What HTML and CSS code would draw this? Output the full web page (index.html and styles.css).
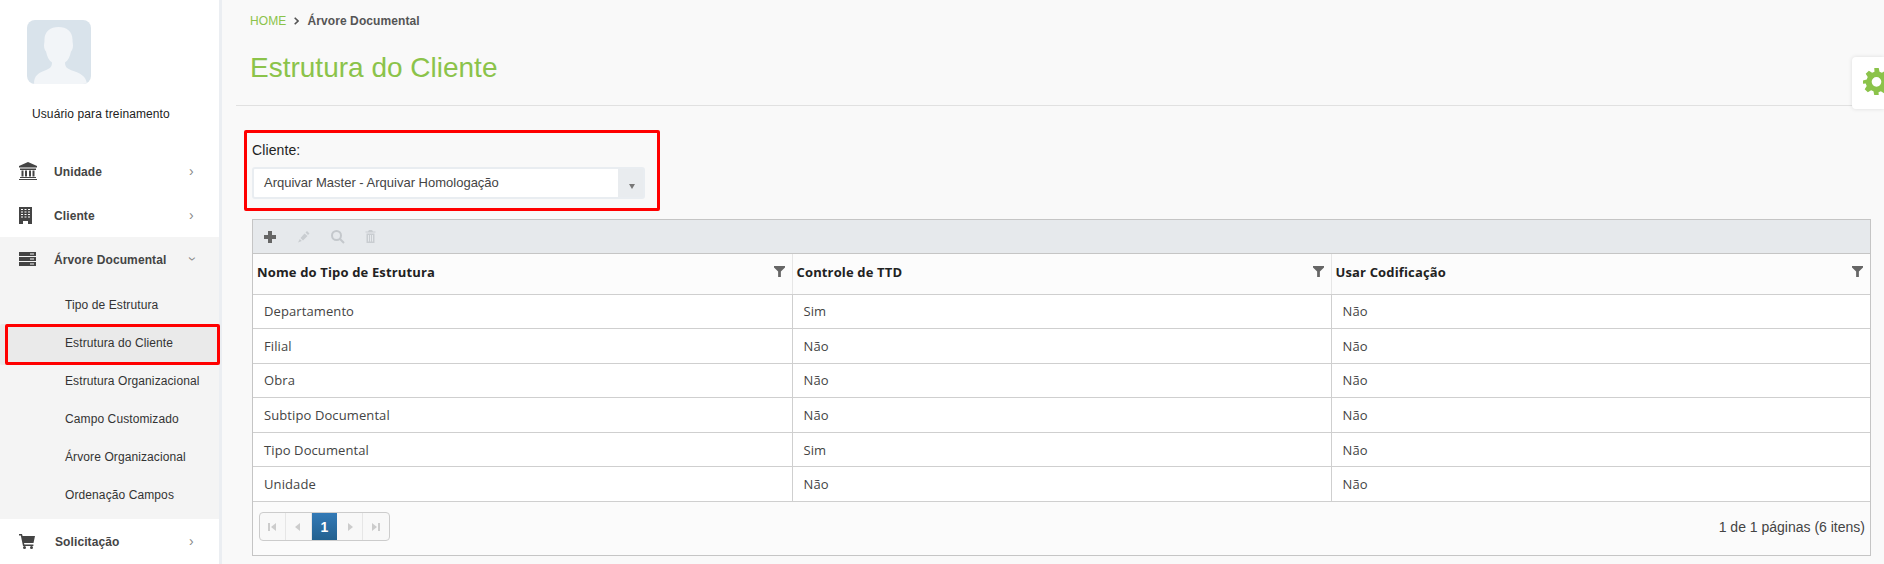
FILE: index.html
```html
<!DOCTYPE html>
<html lang="pt-BR">
<head>
<meta charset="utf-8">
<title>Estrutura do Cliente</title>
<link rel="stylesheet" href="styles.css">
</head>
<body>
<div class="app">
  <aside class="sidebar">
    <div class="avatar">
      <svg viewBox="0 0 64 64" width="64" height="64"><path fill="#f2f5f8" d="M7 64c0-8 4-11 11-13.500 5-2 7-3.500 7-8-3-2-5-6-6-11-1-1-2-3-2-6 0-2 .5-3 .5-6 0-8 6-12.500 14-12.500s14 4.500 14 12.500c0 3 .5 4 .5 6 0 3-1 5-2 6-1 5-3 9-6 11 0 4.500 2 6 7 8 8 2.500 14 5.500 15 13.500z"/></svg>
    </div>
    <div class="username">Usuário para treinamento</div>
    <nav class="menu">
      <a class="item"><span class="ico"><svg viewBox="0 0 18 18" width="18" height="18"><path fill="#444" d="M9 0l9 4v1.500H0V4zM1 6.500h16V8H1zM2.500 8.500h2v6h-2zM6 8.500h2v6H6zM10 8.500h2v6h-2zM13.500 8.500h2v6h-2zM1 15h16v1H1zM0 17h18v1H0z"/></svg></span><span class="label">Unidade</span><span class="chev">›</span></a>
      <a class="item"><span class="ico"><svg viewBox="0 0 13 17" width="13" height="17"><path fill="#444" fill-rule="evenodd" d="M0 0h13v17H0zM2 2v1h2V2zM5.500 2v1h2V2zM9 2v1h2V2zM2 4.500v1h2v-1zM5.500 4.500v1h2v-1zM9 4.500v1h2v-1zM2 7v1h2V7zM5.500 7v1h2V7zM9 7v1h2V7zM2 9.500v1h2v-1zM5.500 9.500v1h2v-1zM9 9.500v1h2v-1zM4 14v3h5v-3z"/></svg></span><span class="label">Cliente</span><span class="chev">›</span></a>
      <div class="group">
        <a class="item"><span class="ico"><svg viewBox="0 0 17 14" width="17" height="14"><path fill="#444" fill-rule="evenodd" d="M0 0h17v4H0zM11 1.500V2.500h4v-1zM0 5h17v4H0zM11 6.500v1h4v-1zM0 10h17v4H0zM11 11.500v1h4v-1z"/></svg></span><span class="label">Árvore Documental</span><span class="chev open">›</span></a>
        <ul class="sub">
          <li>Tipo de Estrutura</li>
          <li class="active">Estrutura do Cliente</li>
          <li>Estrutura Organizacional</li>
          <li>Campo Customizado</li>
          <li>Árvore Organizacional</li>
          <li>Ordenação Campos</li>
        </ul>
      </div>
      <a class="item"><span class="ico ico-wide"><svg viewBox="0 0 16 15" width="16" height="15"><path fill="#444" d="M0 0h3l.6 2H16l-1.500 7H5l.4 1.500h9V12H4L1.800 1.500H0z"/><circle fill="#444" cx="5.500" cy="13.500" r="1.500"/><circle fill="#444" cx="12.500" cy="13.500" r="1.500"/></svg></span><span class="label">Solicitação</span><span class="chev">›</span></a>
    </nav>
  </aside>
  <main class="content">
    <div class="breadcrumb"><span class="home">HOME</span><svg class="sep" viewBox="0 0 5 8" width="5" height="8"><path fill="none" stroke="#555" stroke-width="1.600" d="M.7.7L4 4 .7 7.300"/></svg><strong>Árvore Documental</strong></div>
    <h1 class="title">Estrutura do Cliente</h1>
    <div class="gear"><svg viewBox="0 0 24 24" width="27" height="27"><path fill="#8bc34a" fill-rule="evenodd" d="M10 0h4l.7 3.300 2.100.9L19.700 2.400l2.800 2.800-1.800 2.900.9 2.100L24 11v3l-3.300.7-.9 2.100 1.800 2.900-2.800 2.800-2.900-1.800-2.100.9L14 24h-4l-.7-3.300-2.100-.9-2.900 1.800-2.800-2.800 1.800-2.900-.9-2.100L0 14v-3l3.300-.8.9-2.100-1.800-2.900 2.800-2.800 2.900 1.800 2.100-.9zM12 8a4.300 4.300 0 100 8.600A4.300 4.300 0 0012 8z"/></svg></div>
    <div class="client-box">
      <label class="client-label">Cliente:</label>
      <div class="combo"><span class="combo-text">Arquivar Master - Arquivar Homologação</span><span class="combo-btn"></span></div>
    </div>
    <section class="grid">
      <div class="toolbar">
        <svg class="tool" viewBox="0 0 14 14" width="14" height="14"><path fill="#666" d="M5 1h4v4h4v4H9v4H5V9H1V5h4z"/></svg>
        <svg class="tool" viewBox="0 0 14 14" width="14" height="14"><path fill="#c9cdd1" d="M7.500 3.500l3 2.500L6 10.500 3.500 8zM8.500 2.500l1.500-1.500 2.500 2.500L11 5zM2.800 9l2 2-3.800 1.500z"/></svg>
        <svg class="tool" viewBox="0 0 14 14" width="14" height="14"><path fill="none" stroke="#c4c8cc" stroke-width="2" d="M10 5.500a4.500 4.500 0 11-9 0 4.500 4.500 0 019 0zM8.500 8.500l4.500 4.500"/></svg>
        <svg class="tool" viewBox="0 0 14 14" width="14" height="14"><path fill="#c9cdd1" fill-rule="evenodd" d="M4 0h3l1 1.500h2.500v1H.500v-1H3zM1.500 3.500h8V13h-8zM3 5v6.500h1V5zM5 5v6.500h1V5zM7 5v6.500h1V5z"/></svg>
      </div>
      <table class="tbl">
        <colgroup><col class="c1"><col class="c2"><col class="c3"></colgroup>
        <thead>
          <tr>
            <th><span>Nome do Tipo de Estrutura</span><svg class="filter" viewBox="0 0 12 12" width="11" height="11"><path fill="#666" d="M0 0h12v1.500L7.500 6v6h-3V6L0 1.500z"/></svg></th>
            <th><span>Controle de TTD</span><svg class="filter" viewBox="0 0 12 12" width="11" height="11"><path fill="#666" d="M0 0h12v1.500L7.500 6v6h-3V6L0 1.500z"/></svg></th>
            <th><span>Usar Codificação</span><svg class="filter" viewBox="0 0 12 12" width="11" height="11"><path fill="#666" d="M0 0h12v1.500L7.500 6v6h-3V6L0 1.500z"/></svg></th>
          </tr>
        </thead>
        <tbody>
          <tr><td>Departamento</td><td>Sim</td><td>Não</td></tr>
          <tr><td>Filial</td><td>Não</td><td>Não</td></tr>
          <tr><td>Obra</td><td>Não</td><td>Não</td></tr>
          <tr><td>Subtipo Documental</td><td>Não</td><td>Não</td></tr>
          <tr><td>Tipo Documental</td><td>Sim</td><td>Não</td></tr>
          <tr><td>Unidade</td><td>Não</td><td>Não</td></tr>
        </tbody>
      </table>
      <div class="pager">
        <div class="pages">
          <span class="pg"><svg viewBox="0 0 8 8" width="8" height="8"><path fill="#ccc" d="M0 0h2v8H0zM8 0v8L3 4z"/></svg></span>
          <span class="pg"><svg viewBox="0 0 8 8" width="8" height="8"><path fill="#ccc" d="M6 0v8L1 4z"/></svg></span>
          <span class="pg current">1</span>
          <span class="pg"><svg viewBox="0 0 8 8" width="8" height="8"><path fill="#ccc" d="M2 0v8l5-4z"/></svg></span>
          <span class="pg"><svg viewBox="0 0 8 8" width="8" height="8"><path fill="#ccc" d="M0 0v8l5-4zM6 0h2v8H6z"/></svg></span>
        </div>
        <span class="info">1 de 1 páginas (6 itens)</span>
      </div>
    </section>
  </main>
</div>
</body>
</html>
```

FILE: styles.css
```css
* { box-sizing: border-box; }
html, body { margin: 0; height: 100%; overflow: hidden; }
body { font-family: "Liberation Sans", Arial, sans-serif; color: #333; background: #f9f9f9; }
.app { display: flex; height: 564px; }

.sidebar { width: 222px; flex: none; background: #fff; border-right: 3px solid #ebeef2; padding-top: 20px; }
.avatar { width: 64px; height: 64px; margin-left: 27px; background: #d9e3eb; border-radius: 8px; overflow: hidden; }
.avatar svg { display: block; }
.username { margin: 22px 0 0 32px; font-size: 12px; line-height: 16px; color: #222; letter-spacing: .1px; }
.menu { margin-top: 27px; display: block; }
.item { display: flex; align-items: center; height: 44px; padding-left: 19px; font-size: 12px; font-weight: 700; color: #444; letter-spacing: .1px; }
.ico { width: 35px; flex: none; display: flex; align-items: center; }
.ico-wide { width: 36px; }
.label { flex: 1; padding-top: 2px; }
.chev { width: 30px; flex: none; font-size: 14px; font-weight: 400; color: #888; }
.chev.open { display: inline-block; transform: rotate(90deg); width: 8px; margin-right: 22px; text-align: center; }
.group { background: #f4f4f4; }
.sub { list-style: none; margin: 0; padding: 5px 0; }
.sub li { height: 38px; line-height: 38px; padding-left: 65px; font-size: 12px; color: #333; letter-spacing: .1px; }
.sub li.active { height: 41px; background: #eaeaea; margin: 0 -1px -3px 5px; padding-left: 57px; border: 3px solid #f00; border-radius: 2px; line-height: 32px; box-shadow: -5px 0 0 #eaeaea; position: relative; }

.content { flex: 1; min-width: 0; position: relative; padding: 0 13px 0 14px; }
.breadcrumb { padding: 13px 0 0 14px; font-size: 12px; line-height: 16px; color: #555; display: flex; align-items: center; letter-spacing: .1px; }
.home { color: #8bc34a; }
.sep { margin: 0 8px; flex: none; }
.breadcrumb strong { font-weight: 700; }
.title { margin: 21px 0 0 14px; font-size: 28px; line-height: 36px; font-weight: 400; color: #8bc34a; }
.content::after { content: ""; position: absolute; left: 14px; right: 0; top: 105px; height: 1px; background: #e1e1e1; }
.gear { position: absolute; right: 0; top: 57px; width: 32px; height: 52px; background: #fff; border-radius: 4px 0 0 4px; box-shadow: 0 0 4px rgba(0,0,0,.12); padding: 11px 0 0 11px; z-index: 1; overflow: hidden; }
.gear svg { display: block; }

.client-box { width: 416px; height: 81px; margin: 44px 0 0 8px; border: 3px solid #f00; border-radius: 2px; padding: 7px 5px 0; }
.client-label { display: block; font-size: 14px; line-height: 20px; color: #222; letter-spacing: .1px; }
.combo { display: flex; height: 32px; margin-top: 7px; width: 393px; background: #fff; border: 2px solid #e9edf1; border-radius: 3px; }
.combo-text { flex: 1; padding-left: 10px; font-size: 13px; line-height: 27px; color: #444; }
.combo-btn { width: 25px; background: #e9ecef; position: relative; }
.combo-btn::after { content: ""; position: absolute; left: 11px; top: 15px; border: 3px solid transparent; border-top: 5px solid #777; border-bottom: 0; }

.grid { margin: 8px 0 0 16px; width: 1619px; border: 1px solid #c5c5c5; background: #fff; }
.toolbar { height: 34px; background: #e6e9ec; border-bottom: 1px solid #c5c5c5; display: flex; align-items: center; gap: 20px; padding-left: 10px; }
.tool { display: block; }
.tbl { width: 100%; table-layout: fixed; border-collapse: collapse; font-family: "Open Sans", sans-serif; }
.c1 { width: 539px; }
.c2 { width: 539px; }
.tbl th { height: 40px; padding: 9px 3px 0 4px; vertical-align: top; line-height: 18px; background: #fcfcfc; font-size: 13px; font-weight: 700; color: #222; text-align: left; border-bottom: 1px solid #cfcfcf; border-left: 1px solid #e6e6e6; letter-spacing: .15px; }
.tbl th:first-child { border-left: 0; }
.tbl th span { display: inline-block; }
.filter { float: right; margin: 3px 4px 0 0; }
.tbl td { height: 34.600px; padding: 0 0 0 11px; font-size: 13px; color: #444; border-bottom: 1px solid #cfcfcf; border-left: 1px solid #cfcfcf; letter-spacing: .1px; }
.tbl td:first-child { border-left: 0; }
.pager { height: 53px; background: #fbfbfb; display: flex; align-items: flex-start; justify-content: space-between; padding: 10px 5px 0 6px; }
.pages { display: flex; height: 29px; border: 1px solid #ccc; border-radius: 4px; overflow: hidden; background: #f8f8f8; }
.pg { width: 25.800px; display: flex; align-items: center; justify-content: center; border-right: 1px solid #e6e6e6; }
.pg:last-child { border-right: 0; }
.pg.current { background: linear-gradient(#337ab7, #23618f); color: #fff; font-size: 14px; font-weight: 700; border-right: 0; }
.info { font-size: 14px; line-height: 30px; color: #444; }
```
